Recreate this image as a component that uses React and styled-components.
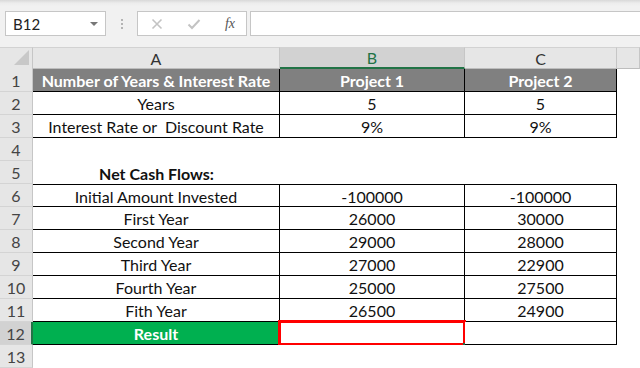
import React from 'react';
import styled, { createGlobalStyle } from 'styled-components';

const GlobalStyle = createGlobalStyle`
  html, body {
    margin: 0;
    padding: 0;
    background: #ffffff;
  }
  body {
    font-family: Lato, "Liberation Sans", sans-serif;
  }
`;

const rows = [
  { n: 1, kind: 'title', cells: ['Number of Years & Interest Rate', 'Project 1', 'Project 2'] },
  { n: 2, kind: 'box', cells: ['Years', '5', '5'] },
  { n: 3, kind: 'box', cells: ['Interest Rate or  Discount Rate', '9%', '9%'] },
  { n: 4, kind: 'blank', cells: ['', '', ''] },
  { n: 5, kind: 'label', cells: ['Net Cash Flows:', '', ''] },
  { n: 6, kind: 'box', top: true, cells: ['Initial Amount Invested', '-100000', '-100000'] },
  { n: 7, kind: 'box', cells: ['First Year', '26000', '30000'] },
  { n: 8, kind: 'box', cells: ['Second Year', '29000', '28000'] },
  { n: 9, kind: 'box', cells: ['Third Year', '27000', '22900'] },
  { n: 10, kind: 'box', cells: ['Fourth Year', '25000', '27500'] },
  { n: 11, kind: 'box', cells: ['Fith Year', '26500', '24900'] },
  { n: 12, kind: 'result', cells: ['Result', '', ''] },
  { n: 13, kind: 'blank', cells: ['', '', ''] },
];

const columns = ['A', 'B', 'C', ''];

const App = () => {
  return (
    <>
      <GlobalStyle />
      <Window>
        <FormulaBar>
          <NameBox>
            <span>B12</span>
            <DropArrow />
          </NameBox>
          <Grip>
            <i />
            <i />
            <i />
          </Grip>
          <FnBox>
            <svg width="12" height="12" viewBox="0 0 12 12">
              <path d="M1.5 1.5 L10.5 10.5 M10.5 1.5 L1.5 10.5" stroke="#c3c3c3" strokeWidth="1.6" fill="none" />
            </svg>
            <svg width="14" height="12" viewBox="0 0 14 12">
              <path d="M1.5 6.5 L5 10 L12.5 2" stroke="#c3c3c3" strokeWidth="2" fill="none" />
            </svg>
            <Fx>fx</Fx>
          </FnBox>
          <FormulaInput />
        </FormulaBar>

        <Sheet>
          <Corner>
            <svg width="16" height="16" viewBox="0 0 16 16">
              <polygon points="0,15 15,15 15,0" fill="#c8c8c8" />
            </svg>
          </Corner>
          {columns.map((c, i) => (
            <ColHead key={i} $active={c === 'B'}>{c}</ColHead>
          ))}

          {rows.map((row) => (
            <React.Fragment key={row.n}>
              <RowHead $active={row.n === 12}>{row.n}</RowHead>
              {row.cells.map((text, ci) => {
                const boxed = row.kind === 'title' || row.kind === 'box' || row.kind === 'result';
                const isSelected = row.n === 12 && ci === 1;
                const isResult = row.kind === 'result' && ci === 0;
                return (
                  <Cell
                    key={ci}
                    $boxed={boxed}
                    $top={row.top}
                    $bold={row.kind === 'title' || row.kind === 'label' || isResult}
                    $fill={row.kind === 'title' ? '#808080' : isResult ? '#00b050' : '#ffffff'}
                    $color={row.kind === 'title' || isResult ? '#ffffff' : '#111111'}
                  >
                    {text}
                    {isSelected && (
                      <Selection>
                        <Handle />
                      </Selection>
                    )}
                  </Cell>
                );
              })}
              <Cell $fill="#ffffff" />
            </React.Fragment>
          ))}
        </Sheet>
      </Window>
    </>
  );
};

const Window = styled.div`
  width: 640px;
  height: 368px;
  overflow: hidden;
  display: flex;
  flex-direction: column;
  background: #f1f1f1;
`;

const FormulaBar = styled.div`
  height: 47px;
  box-sizing: border-box;
  padding: 11px 0 0 5px;
  display: flex;
  align-items: flex-start;
  background: linear-gradient(#d8d8d8 0px, #ececec 3px, #f1f1f1 6px);
`;

const NameBox = styled.div`
  width: 101px;
  height: 25px;
  box-sizing: border-box;
  border: 1px solid #c6c6c6;
  background: #ffffff;
  display: flex;
  align-items: center;
  justify-content: space-between;
  padding: 0 7px 0 7px;
  font-size: 15px;
  color: #222222;
`;

const DropArrow = styled.span`
  width: 0;
  height: 0;
  border-left: 4px solid transparent;
  border-right: 4px solid transparent;
  border-top: 4px solid #777777;
  margin-top: 1px;
`;

const Grip = styled.div`
  width: 31px;
  height: 25px;
  display: flex;
  flex-direction: column;
  align-items: center;
  justify-content: center;
  gap: 2px;

  i {
    display: block;
    width: 2px;
    height: 2px;
    background: #b4b4b4;
  }
`;

const FnBox = styled.div`
  width: 110px;
  height: 25px;
  box-sizing: border-box;
  border: 1px solid #c6c6c6;
  background: #ffffff;
  display: flex;
  align-items: center;
  justify-content: space-between;
  padding: 0 11px 0 13px;
`;

const Fx = styled.span`
  font-family: "Liberation Serif", serif;
  font-style: italic;
  font-size: 14px;
  color: #555555;
`;

const FormulaInput = styled.div`
  flex: 1;
  height: 25px;
  margin-left: 3px;
  box-sizing: border-box;
  border: 1px solid #c6c6c6;
  border-right: none;
  background: #ffffff;
`;

const Sheet = styled.div`
  display: grid;
  grid-template-columns: 33px 247px 185px 152px 1fr;
  grid-template-rows: 22px repeat(13, 23px);
  background: #ffffff;
`;

const Corner = styled.div`
  background: #e6e6e6;
  border-top: 1px solid #d2d2d2;
  border-right: 1px solid #c6c6c6;
  box-sizing: border-box;
  display: flex;
  align-items: flex-end;
  justify-content: flex-end;
  padding: 0 2px 3px 0;
`;

const ColHead = styled.div`
  box-sizing: border-box;
  background: ${(p) => (p.$active ? '#d2d2d2' : '#e6e6e6')};
  color: ${(p) => (p.$active ? '#217346' : '#333333')};
  border-top: 1px solid #d2d2d2;
  border-right: 1px solid #c6c6c6;
  border-bottom: ${(p) => (p.$active ? '2px solid #217346' : '1px solid #bdbdbd')};
  display: flex;
  align-items: center;
  justify-content: center;
  font-size: 16px;
`;

const RowHead = styled.div`
  box-sizing: border-box;
  background: ${(p) => (p.$active ? '#d2d2d2' : '#e6e6e6')};
  color: #444444;
  border-bottom: 1px solid #d4d4d4;
  border-right: ${(p) => (p.$active ? '2px solid #217346' : '1px solid #c6c6c6')};
  display: flex;
  align-items: center;
  justify-content: center;
  font-size: 16px;
`;

const Cell = styled.div`
  position: relative;
  box-sizing: border-box;
  background: ${(p) => p.$fill};
  color: ${(p) => p.$color};
  font-weight: ${(p) => (p.$bold ? 700 : 400)};
  font-size: 16px;
  white-space: pre;
  display: flex;
  align-items: center;
  justify-content: center;
  padding-top: 1px;
  border-right: ${(p) => (p.$boxed ? '1px solid #000000' : 'none')};
  border-bottom: ${(p) => (p.$boxed ? '1px solid #000000' : 'none')};
  border-top: ${(p) => (p.$top ? '1px solid #000000' : 'none')};
`;

const Selection = styled.div`
  position: absolute;
  top: -2px;
  left: -2px;
  right: -2px;
  bottom: -2px;
  border: 3px solid #ff0000;
  pointer-events: none;
`;

const Handle = styled.span`
  position: absolute;
  right: -3px;
  bottom: -3px;
  width: 3px;
  height: 3px;
  background: #217346;
`;

export default App;
